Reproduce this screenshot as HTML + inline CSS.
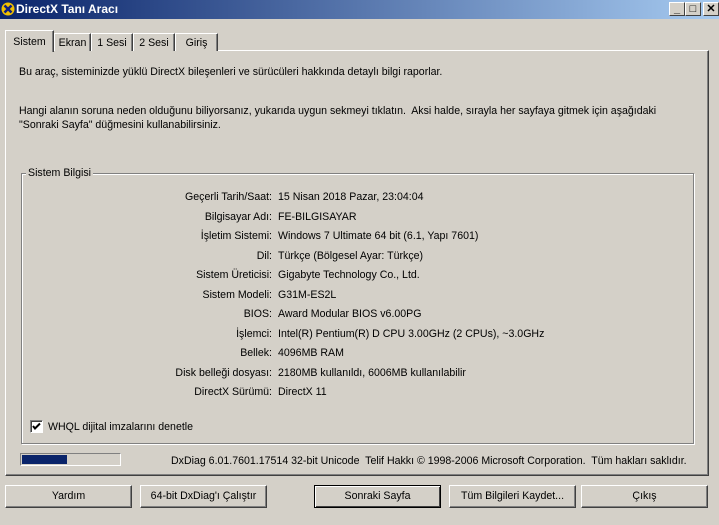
<!DOCTYPE html>
<html><head><meta charset="utf-8"><style>
*{margin:0;padding:0;box-sizing:border-box}
body{width:719px;height:525px;background:#d4d0c8;font-family:"Liberation Sans",sans-serif;font-size:10.6px;color:#000;position:relative;overflow:hidden}
.a{position:absolute;white-space:nowrap}
.title{left:0;top:0;width:719px;height:19px;background:linear-gradient(90deg,#0a246a,#a6caf0);color:#fff;font-weight:bold;font-size:12px}
.wb{position:absolute;top:2px;width:16px;height:14px;background:#d4d0c8;border:1px solid;border-color:#fff #404040 #404040 #fff;font-size:11px;text-align:center;line-height:12px;color:#000;font-weight:bold}
.panel{left:5px;top:50px;width:704px;height:426px;border:1px solid;border-color:#fff #404040 #404040 #fff;box-shadow:inset -1px -1px 0 #808080}
.tab{position:absolute;top:33px;height:18px;border:1px solid;border-bottom:none;border-color:#fff #404040 #404040 #fff;box-shadow:inset -1px 0 0 #808080;padding:3px 0 0;text-align:center;background:#d4d0c8}
.grp{left:21px;top:173px;width:673px;height:271px;border:1px solid #808080;box-shadow:1px 1px 0 #fff,inset 1px 1px 0 #fff}
.lab{position:absolute;right:447px;text-align:right}
.val{position:absolute;left:278px}
.btn{position:absolute;top:485px;height:23px;width:127px;border:1px solid;border-color:#fff #404040 #404040 #fff;box-shadow:inset -1px -1px 0 #808080;text-align:center;line-height:21px}
</style></head><body>
<div class="a title"><svg style="position:absolute;left:1px;top:2px" width="14" height="14"><circle cx="7" cy="7" r="6.5" fill="#f0c000"/><path d="M3.5 3.5L10.5 10.5M10.5 3.5L3.5 10.5" stroke="#102080" stroke-width="2.5"/></svg><span style="position:absolute;left:16px;top:2px">DirectX Tanı Aracı</span>
<div class="wb" style="left:669px">_</div><div class="wb" style="left:685px">□</div><div class="wb" style="left:703px">✕</div></div>
<div class="a panel"></div>
<div class="tab" style="left:54px;width:37px">Ekran</div>
<div class="tab" style="left:91px;width:42px">1 Sesi</div>
<div class="tab" style="left:133px;width:42px">2 Sesi</div>
<div class="tab" style="left:175px;width:43px">Giriş</div>
<div class="tab" style="left:5px;top:30px;height:22px;width:49px;padding-top:5px;border-bottom:none">Sistem</div>
<div class="a" style="left:19px;top:66px">Bu araç, sisteminizde yüklü DirectX bileşenleri ve sürücüleri hakkında detaylı bilgi raporlar.</div>
<div class="a" style="left:19px;top:104px;line-height:14px">Hangi alanın soruna neden olduğunu biliyorsanız, yukarıda uygun sekmeyi tıklatın.&nbsp; Aksi halde, sırayla her sayfaya gitmek için aşağıdaki<br>"Sonraki Sayfa" düğmesini kullanabilirsiniz.</div>
<div class="a grp"></div>
<div class="a" style="left:26px;top:167px;background:#d4d0c8;padding:0 2px">Sistem Bilgisi</div>
<div class="a" style="left:0;top:191px;width:719px">
<div class="lab" style="top:0">Geçerli Tarih/Saat:</div><div class="val" style="top:0">15 Nisan 2018 Pazar, 23:04:04</div>
<div class="lab" style="top:19.5px">Bilgisayar Adı:</div><div class="val" style="top:19.5px">FE-BILGISAYAR</div>
<div class="lab" style="top:39px">İşletim Sistemi:</div><div class="val" style="top:39px">Windows 7 Ultimate 64 bit (6.1, Yapı 7601)</div>
<div class="lab" style="top:58.5px">Dil:</div><div class="val" style="top:58.5px">Türkçe (Bölgesel Ayar: Türkçe)</div>
<div class="lab" style="top:78px">Sistem Üreticisi:</div><div class="val" style="top:78px">Gigabyte Technology Co., Ltd.</div>
<div class="lab" style="top:97.5px">Sistem Modeli:</div><div class="val" style="top:97.5px">G31M-ES2L</div>
<div class="lab" style="top:117px">BIOS:</div><div class="val" style="top:117px">Award Modular BIOS v6.00PG</div>
<div class="lab" style="top:136.5px">İşlemci:</div><div class="val" style="top:136.5px">Intel(R) Pentium(R) D CPU 3.00GHz (2 CPUs), ~3.0GHz</div>
<div class="lab" style="top:156px">Bellek:</div><div class="val" style="top:156px">4096MB RAM</div>
<div class="lab" style="top:175.5px">Disk belleği dosyası:</div><div class="val" style="top:175.5px">2180MB kullanıldı, 6006MB kullanılabilir</div>
<div class="lab" style="top:195px">DirectX Sürümü:</div><div class="val" style="top:195px">DirectX 11</div>
</div>
<div class="a" style="left:30px;top:420px;width:13px;height:13px;background:#fff;border:1px solid;border-color:#808080 #fff #fff #808080;box-shadow:inset 1px 1px 0 #404040"><svg width="11" height="11" style="position:absolute;left:0;top:0"><path d="M2 5L4 7.5L9 2.5" stroke="#000" stroke-width="2" fill="none"/></svg></div>
<div class="a" style="left:48px;top:421px">WHQL dijital imzalarını denetle</div>
<div class="a" style="left:20px;top:453px;width:101px;height:13px;border:1px solid;border-color:#808080 #fff #fff #808080"><div style="position:absolute;left:1px;top:1px;width:45px;height:9px;background:#0a246a"></div></div>
<div class="a" style="left:171px;top:455px">DxDiag 6.01.7601.17514 32-bit Unicode&nbsp; Telif Hakkı © 1998-2006 Microsoft Corporation.&nbsp; Tüm hakları saklıdır.</div>
<div class="btn" style="left:5px">Yardım</div>
<div class="btn" style="left:140px">64-bit DxDiag'ı Çalıştır</div>
<div class="btn" style="left:314px;border:1px solid #000;box-shadow:inset 1px 1px 0 #fff,inset -1px -1px 0 #404040">Sonraki Sayfa</div>
<div class="btn" style="left:449px">Tüm Bilgileri Kaydet...</div>
<div class="btn" style="left:581px">Çıkış</div>
</body></html>
